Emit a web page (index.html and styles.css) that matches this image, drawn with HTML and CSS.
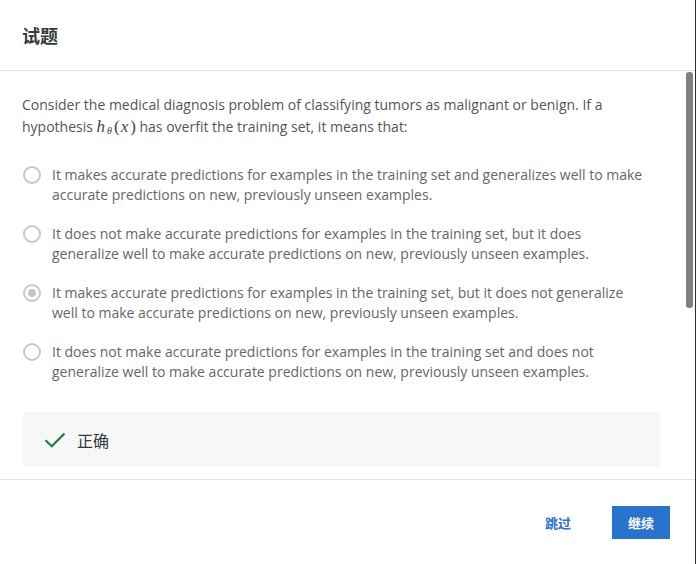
FILE: index.html
```html
<!DOCTYPE html>
<html lang="zh">
<head>
<meta charset="utf-8">
<title>试题</title>
<link rel="stylesheet" href="styles.css">
</head>
<body>
<div class="dialog">
  <header class="dialog-header">
    <h1 class="dialog-title">试题</h1>
  </header>
  <main class="dialog-body">
    <div class="body-inner">
      <p class="question">Consider the medical diagnosis problem of classifying tumors as malignant or benign. If a hypothesis <span class="math"><i class="mi">h</i><sub class="msub"><i>θ</i></sub><span class="mp">(<i class="mx">x</i>)</span></span> has overfit the training set, it means that:</p>
      <ul class="options">
        <li class="option"><span class="radio"></span><span class="option-text">It makes accurate predictions for examples in the training set and generalizes well to make accurate predictions on new, previously unseen examples.</span></li>
        <li class="option"><span class="radio"></span><span class="option-text">It does not make accurate predictions for examples in the training set, but it does generalize well to make accurate predictions on new, previously unseen examples.</span></li>
        <li class="option"><span class="radio radio-checked"></span><span class="option-text">It makes accurate predictions for examples in the training set, but it does not generalize well to make accurate predictions on new, previously unseen examples.</span></li>
        <li class="option"><span class="radio"></span><span class="option-text">It does not make accurate predictions for examples in the training set and does not generalize well to make accurate predictions on new, previously unseen examples.</span></li>
      </ul>
      <div class="feedback">
        <svg class="check" width="22" height="16" viewBox="0 0 22 16" aria-hidden="true"><path d="M1.5 8.2 L7.8 14.3 L20.5 1.5" fill="none" stroke="#1f7a4d" stroke-width="2.2"/></svg>
        <span class="feedback-text">正确</span>
      </div>
    </div>
    <div class="scroll-thumb"></div>
  </main>
  <footer class="dialog-footer">
    <button class="btn-skip" type="button">跳过</button>
    <button class="btn-primary" type="button">继续</button>
  </footer>
</div>
</body>
</html>
```
FILE: styles.css
```css
html, body {
  margin: 0;
  padding: 0;
  background: #ffffff;
}
body {
  font-family: "Open Sans", "Noto Sans CJK SC", sans-serif;
}
.dialog {
  height: 564px;
  width: 696px;
  display: flex;
  flex-direction: column;
  border-right: 1px solid #2e2e2e;
  box-sizing: border-box;
}
.dialog-header {
  height: 70px;
  flex: none;
  border-bottom: 1px solid #e1e1e1;
  display: flex;
  align-items: center;
  padding: 0 22px;
}
.dialog-title {
  margin: 0;
  font-family: "Noto Sans CJK SC", sans-serif;
  font-size: 18px;
  font-weight: 700;
  color: #373a3c;
}
.dialog-body {
  flex: 1;
  min-height: 0;
  overflow: hidden;
  position: relative;
}
.scroll-thumb {
  position: absolute;
  top: 1px;
  right: 2px;
  width: 7px;
  height: 236px;
  border-radius: 3px;
  background: #808080;
}
.body-inner {
  padding: 23px 35px 0 22px;
}
.question {
  margin: 0;
  font-size: 14px;
  line-height: 22px;
  color: #555555;
}
.math {
  font-family: "Liberation Serif", "DejaVu Serif", serif;
  font-size: 17px;
  color: #444;
  white-space: nowrap;
}
.mi {
  font-style: italic;
  padding-right: 2px;
}
.mx {
  font-style: italic;
  padding: 0 2px 0 1px;
}
.mp {
  font-style: normal;
  padding-left: 1px;
}
.msub {
  font-size: 10px;
  vertical-align: -2px;
  line-height: 0;
  padding-right: 1px;
}
.msub i {
  font-style: italic;
}
.options {
  list-style: none;
  margin: 27px 0 0;
  padding: 0 14px 0 0;
  display: flex;
  flex-direction: column;
  gap: 19px;
}
.option {
  display: flex;
  align-items: flex-start;
  gap: 11px;
}
.radio {
  flex: none;
  width: 18px;
  height: 18px;
  box-sizing: border-box;
  border: 2px solid #c8c8c8;
  border-radius: 50%;
  margin: 1px 0 0 1px;
  display: flex;
  align-items: center;
  justify-content: center;
}
.radio-checked::after {
  content: "";
  width: 8px;
  height: 8px;
  border-radius: 50%;
  background: #c4c4c4;
}
.option-text {
  font-size: 14px;
  line-height: 20px;
  color: #666666;
}
.feedback {
  margin-top: 30px;
  margin-left: 1px;
  height: 55px;
  background: #f5f8f7;
  display: flex;
  align-items: center;
  padding-left: 21px;
  gap: 11px;
}
.check {
  display: block;
}
.feedback-text {
  font-family: "Noto Sans CJK SC", sans-serif;
  font-size: 16px;
  color: #373a3c;
}
.dialog-footer {
  height: 84px;
  flex: none;
  border-top: 1px solid #e1e1e1;
  display: flex;
  align-items: center;
  justify-content: flex-end;
  padding-right: 25px;
  gap: 25px;
}
.btn-skip, .btn-primary {
  font-family: "Noto Sans CJK SC", sans-serif;
  font-size: 13px;
  font-weight: 700;
  border: none;
  cursor: pointer;
}
.btn-skip {
  background: transparent;
  color: #2a73cc;
  padding: 8px 16px;
}
.btn-primary {
  background: #2a73cc;
  color: #ffffff;
  height: 33px;
  width: 58px;
  padding: 0;
}
```
